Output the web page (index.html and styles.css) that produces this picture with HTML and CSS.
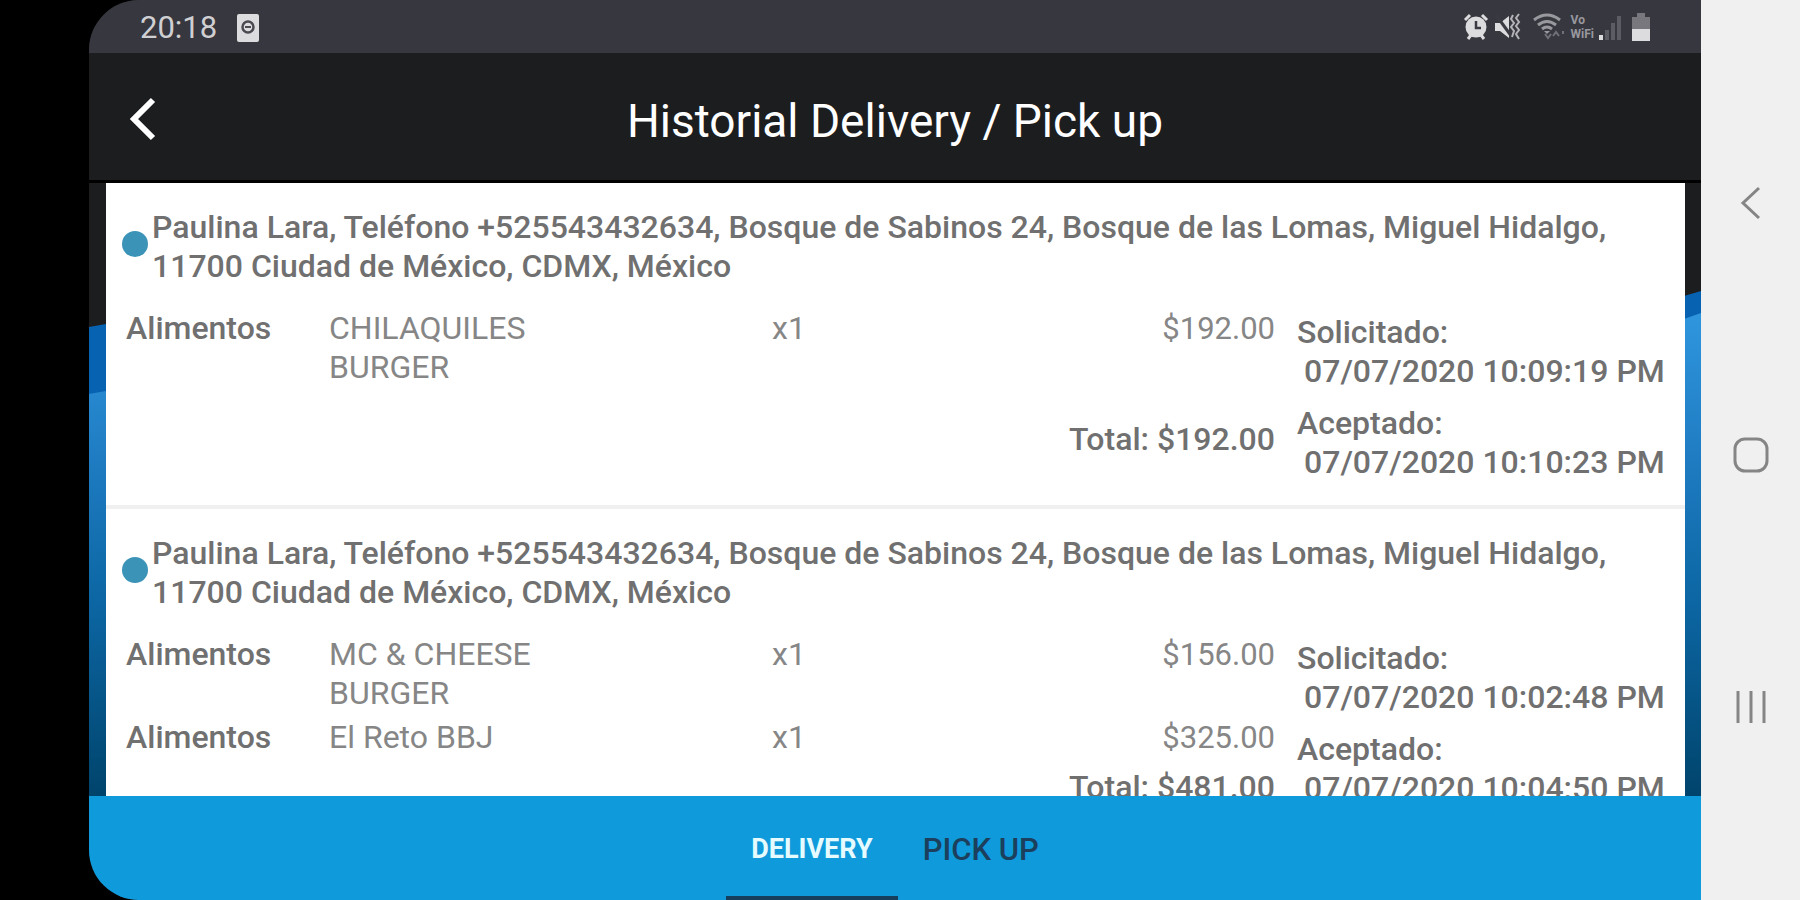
FILE: index.html
```html
<!DOCTYPE html>
<html lang="es">
<head>
    <meta charset="UTF-8">
    <meta name="viewport" content="width=device-width, initial-scale=1.0">
    <title>Historial Delivery / Pick up</title>
    <link rel="stylesheet" href="styles.css">
</head>
<body>
    <div class="app">
        <div class="status-bar">
            <div class="status-left">
                <span>20:18</span>
                <svg width="22" height="28" viewBox="0 0 22 28">
                    <rect width="22" height="28" rx="2" fill="#dcdcde"/>
                    <circle cx="11" cy="13" r="5.5" fill="none" stroke="#4a4a50" stroke-width="2.5"/>
                    <path d="M8 13h6" stroke="#4a4a50" stroke-width="2"/>
                </svg>
            </div>
            <div class="status-icons">
                <!-- alarm -->
                <svg width="26" height="28" viewBox="0 0 26 28">
                    <path d="M2 7l5-5M24 7l-5-5M5 26l3-4M21 26l-3-4" stroke="#dcdcde" stroke-width="3"/>
                    <circle cx="13" cy="14" r="10.5" fill="#dcdcde"/>
                    <path d="M13 8v7h5" fill="none" stroke="#3a3a42" stroke-width="2.5"/>
                </svg>
                <!-- muted speaker with vibration -->
                <svg width="27" height="28" viewBox="0 0 27 28">
                    <path d="M1 10h5l9-7v22l-9-7H1z" fill="#dcdcde"/>
                    <path d="M2 2l16 22" stroke="#3a3a42" stroke-width="3"/>
                    <path d="M19 2l-2 4 3 4-3 4 3 4-2 6M25 1l-3 4 3 4-3 4 3 4-3 4 3 5" fill="none" stroke="#b4b4b8" stroke-width="2"/>
                </svg>
                <!-- wifi -->
                <svg class="wifi" width="34" height="28" viewBox="0 0 34 28">
                    <path d="M2 7q13-10 26 0M6 12q9-7 18 0M10 16q5-4 10 0" fill="none" stroke="#98989e" stroke-width="3"/>
                    <path d="M12 18h6l-3 3z" fill="#98989e"/>
                    <path d="M13 21l3 4 3-4M21 23l3-4 3 4M31 18v3" fill="none" stroke="#707078" stroke-width="2"/>
                </svg>
                <div class="volte"><span>Vo</span><span>WiFi</span></div>
                <!-- signal -->
                <svg width="22" height="28" viewBox="0 0 22 28">
                    <path d="M0 22h4v5H0z" fill="#dcdcde"/>
                    <path d="M6 17h4v10H6zM12 10h4v17h-4zM18 3h4v24h-4z" fill="#5c5c64"/>
                </svg>
                <!-- battery -->
                <svg class="battery" width="18" height="28" viewBox="0 0 18 28">
                    <path d="M5 0h8v4h5v13H0V4h5z" fill="#77777d"/>
                    <path d="M0 16h18v12H0z" fill="#dcdcde"/>
                </svg>
            </div>
        </div>

        <header>
            <button class="back-btn" aria-label="Atrás">
                <svg width="28" height="46" viewBox="0 0 28 46">
                    <path d="M24 4L5 23l19 19" fill="none" stroke="#fff" stroke-width="6"/>
                </svg>
            </button>
            <h1>Historial Delivery / Pick up</h1>
        </header>

        <main>
            <svg class="backdrop" viewBox="0 0 1612 613" preserveAspectRatio="none">
                <defs>
                    <linearGradient id="wave" x1="0" y1="0" x2="0" y2="1">
                        <stop offset="0" stop-color="#2f96de"/>
                        <stop offset="0.3" stop-color="#1f7cc2"/>
                        <stop offset="0.6" stop-color="#0c66a3"/>
                        <stop offset="1" stop-color="#00446c"/>
                    </linearGradient>
                </defs>
                <path d="M0 144L17 141L1595 113L1612 108V613H0z" fill="#0862b2"/>
                <path d="M0 211L17 208L1595 136L1612 130V613H0z" fill="url(#wave)"/>
            </svg>
            <div class="orders">
                <article class="order">
                    <div class="customer">
                        <span class="dot"></span>
                        <h2>Paulina Lara, Teléfono +525543432634, Bosque de Sabinos 24, Bosque de las Lomas, Miguel Hidalgo, 11700 Ciudad de México, CDMX, México</h2>
                    </div>
                    <div class="detail">
                        <div class="items">
                            <table>
                                <tr>
                                    <th scope="row">Alimentos</th>
                                    <td class="product">CHILAQUILES BURGER</td>
                                    <td>x1</td>
                                    <td class="price">$192.00</td>
                                </tr>
                            </table>
                            <p class="total">Total: $192.00</p>
                        </div>
                        <dl class="times">
                            <dt>Solicitado:</dt>
                            <dd>07/07/2020 10:09:19 PM</dd>
                            <dt>Aceptado:</dt>
                            <dd>07/07/2020 10:10:23 PM</dd>
                        </dl>
                    </div>
                </article>
                <article class="order">
                    <div class="customer">
                        <span class="dot"></span>
                        <h2>Paulina Lara, Teléfono +525543432634, Bosque de Sabinos 24, Bosque de las Lomas, Miguel Hidalgo, 11700 Ciudad de México, CDMX, México</h2>
                    </div>
                    <div class="detail">
                        <div class="items">
                            <table>
                                <tr>
                                    <th scope="row">Alimentos</th>
                                    <td class="product">MC &amp; CHEESE BURGER</td>
                                    <td>x1</td>
                                    <td class="price">$156.00</td>
                                </tr>
                                <tr>
                                    <th scope="row">Alimentos</th>
                                    <td class="product">El Reto BBJ</td>
                                    <td>x1</td>
                                    <td class="price">$325.00</td>
                                </tr>
                            </table>
                            <p class="total">Total: $481.00</p>
                        </div>
                        <dl class="times">
                            <dt>Solicitado:</dt>
                            <dd>07/07/2020 10:02:48 PM</dd>
                            <dt>Aceptado:</dt>
                            <dd>07/07/2020 10:04:50 PM</dd>
                        </dl>
                    </div>
                </article>
            </div>
        </main>

        <nav class="tabs">
            <button class="tab active">DELIVERY</button>
            <button class="tab">PICK UP</button>
        </nav>
    </div>

    <div class="system-nav">
        <button aria-label="Atrás">
            <svg width="36" height="36" viewBox="0 0 36 36">
                <path d="M26 3L10 18l16 15" fill="none" stroke="#858585" stroke-width="3"/>
            </svg>
        </button>
        <button aria-label="Inicio">
            <svg width="36" height="36" viewBox="0 0 36 36">
                <rect x="2" y="2" width="32" height="32" rx="10" fill="none" stroke="#858585" stroke-width="3"/>
            </svg>
        </button>
        <button aria-label="Recientes">
            <svg width="36" height="36" viewBox="0 0 36 36">
                <path d="M5 2v32M18 2v32M31 2v32" stroke="#858585" stroke-width="3"/>
            </svg>
        </button>
    </div>
</body>
</html>
```
FILE: styles.css
```css
/* Base Styles */
* {
    margin: 0;
    padding: 0;
    box-sizing: border-box;
}

body {
    font-family: Roboto, sans-serif;
    font-size: 32px;
    line-height: 39px;
    background: #000;
    color: #707070;
    display: flex;
    height: 100vh;
    padding-left: 89px;
    overflow: hidden;
}

button {
    font-family: inherit;
    border: none;
    background: none;
    cursor: pointer;
}

svg {
    display: block;
}

.app {
    flex: 1;
    min-width: 0;
    display: flex;
    flex-direction: column;
    border-radius: 50px 0 0 50px;
    overflow: hidden;
    background: #1c1d1f;
}

/* Status bar */
.status-bar {
    height: 53px;
    flex-shrink: 0;
    padding: 0 51px;
    display: flex;
    justify-content: space-between;
    align-items: center;
    background: #37373f;
    color: #d0d0d2;
}

.status-left,
.status-icons {
    display: flex;
    align-items: center;
}

.status-left {
    gap: 20px;
    padding-top: 2px;
    font-size: 31px;
}

.status-icons {
    gap: 5px;
}

.wifi {
    margin-left: 6px;
}

.volte {
    display: flex;
    flex-direction: column;
    font-size: 12px;
    line-height: 14px;
    font-weight: 700;
    color: #98989e;
}

.battery {
    margin-left: 6px;
}

/* Header */
header {
    height: 130px;
    flex-shrink: 0;
    padding: 4px 34px 0;
    display: grid;
    grid-template-columns: 40px 1fr 40px;
    align-items: center;
    border-bottom: 3px solid #000;
    color: #fff;
}

.back-btn {
    width: 40px;
    height: 48px;
}

.back-btn svg {
    margin: 0 auto;
}

h1 {
    padding-top: 4px;
    text-align: center;
    font-size: 46px;
    line-height: 56px;
    font-weight: 400;
}

/* Orders */
main {
    flex: 1;
    min-height: 0;
    position: relative;
    padding: 0 16px 0 17px;
}

.backdrop {
    position: absolute;
    inset: 0;
    width: 100%;
    height: 100%;
}

.orders {
    position: relative;
    height: 100%;
    overflow: hidden;
    background: #fff;
}

.order {
    padding: 25px 16px 10px 20px;
    border-bottom: 4px solid #f0f0f0;
}

.customer {
    display: flex;
    margin-left: -4px;
}

.dot {
    width: 26px;
    height: 26px;
    flex-shrink: 0;
    margin: 23px 4px 0 0;
    border-radius: 50%;
    background: #3b93b7;
}

h2 {
    font-size: 32px;
    font-weight: 500;
}

.detail {
    display: flex;
    align-items: flex-start;
    gap: 22px;
    margin-top: 23px;
}

.items {
    flex: 1;
    display: flex;
    flex-direction: column;
    min-height: 150px;
}

table {
    width: 100%;
    table-layout: fixed;
    border-collapse: collapse;
}

th,
td {
    padding-bottom: 5px;
    text-align: left;
    vertical-align: top;
    font-weight: 400;
    color: #868686;
}

th {
    width: 203px;
    font-weight: 500;
    color: #707070;
}

.product {
    width: 443px;
    padding-right: 200px;
}

td.price {
    font-size: 31px;
    text-align: right;
}

.total {
    margin-top: auto;
    padding-top: 6px;
    text-align: right;
    font-weight: 500;
}

.times {
    width: 372px;
    padding-top: 4px;
    font-weight: 500;
}

.times dd {
    padding-left: 7px;
    margin-bottom: 13px;
    white-space: nowrap;
}

/* Tabs */
.tabs {
    height: 104px;
    flex-shrink: 0;
    display: flex;
    justify-content: center;
    background: #0f9bdb;
}

.tab {
    padding: 6px 25px 0;
    font-size: 31px;
    font-weight: 500;
    color: #1b3f5c;
    border-bottom: 4px solid transparent;
}

.tab.active {
    font-size: 27px;
    font-weight: 700;
    color: #e6fbff;
    border-bottom-color: #163f5e;
}

/* System navigation */
.system-nav {
    width: 99px;
    flex-shrink: 0;
    padding-top: 9px;
    display: flex;
    flex-direction: column;
    justify-content: center;
    align-items: center;
    gap: 216px;
    background: #f0f0f0;
}
```
